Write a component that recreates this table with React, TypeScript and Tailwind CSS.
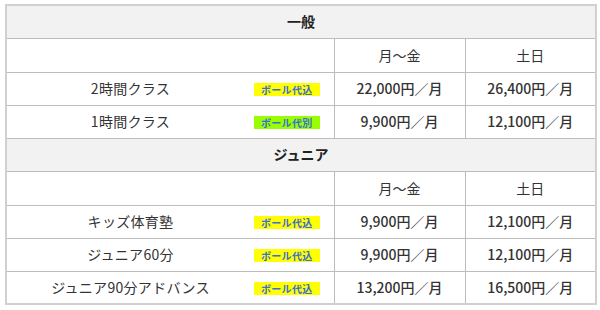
import React from 'react';

type Row = { name: string; badge: 'in' | 'out'; weekday: string; weekend: string };

const SECTIONS: { title: string; rows: Row[] }[] = [
  {
    title: '一般',
    rows: [
      { name: '2時間クラス', badge: 'in', weekday: '22,000円／月', weekend: '26,400円／月' },
      { name: '1時間クラス', badge: 'out', weekday: '9,900円／月', weekend: '12,100円／月' },
    ],
  },
  {
    title: 'ジュニア',
    rows: [
      { name: 'キッズ体育塾', badge: 'in', weekday: '9,900円／月', weekend: '12,100円／月' },
      { name: 'ジュニア60分', badge: 'in', weekday: '9,900円／月', weekend: '12,100円／月' },
      { name: 'ジュニア90分アドバンス', badge: 'in', weekday: '13,200円／月', weekend: '16,500円／月' },
    ],
  },
];

function Badge({ kind }: { kind: 'in' | 'out' }) {
  return (
    <span
      className={
        kind === 'in'
          ? 'inline-block bg-[#ffff00] text-[#3a6fd8] text-[10px] font-bold leading-[13px] px-[7px] tracking-[0.3px]'
          : 'inline-block bg-[#99ff00] text-[#3a6fd8] text-[10px] font-bold leading-[13px] px-[7px] tracking-[0.3px]'
      }
    >
      {kind === 'in' ? 'ボール代込' : 'ボール代別'}
    </span>
  );
}

export default function App() {
  const cell = 'border border-[#bcbcbc] text-center align-middle';
  return (
    <div
      className="bg-white w-[600px] h-[310px] pt-[4px] pl-[5px]"
      style={{ fontFamily: '"Noto Sans CJK JP", "Noto Sans", sans-serif' }}
    >
      <table className="w-[590px] border-collapse border-2 border-[#d0d0d0] text-[14px] text-[#333] table-fixed">
        <colgroup>
          <col className="w-[248px]" />
          <col className="w-[80px]" />
          <col className="w-[131px]" />
          <col className="w-[131px]" />
        </colgroup>
        <tbody>
          {SECTIONS.map(sec => (
            <React.Fragment key={sec.title}>
              <tr className="h-[33px]">
                <td colSpan={4} className={`${cell} bg-[#f2f2f2] font-bold text-[#222]`}>
                  {sec.title}
                </td>
              </tr>
              <tr className="h-[34px]">
                <td colSpan={2} className={cell}></td>
                <td className={cell}>月～金</td>
                <td className={cell}>土日</td>
              </tr>
              {sec.rows.map(r => (
                <tr key={r.name} className="h-[33px]">
                  <td className="border-y border-l border-[#bcbcbc] text-center align-middle tracking-[0.3px]">{r.name}</td>
                  <td className="border-y border-r border-[#bcbcbc] text-left align-middle">
                    <Badge kind={r.badge} />
                  </td>
                  <td className={`${cell} font-medium`}>{r.weekday}</td>
                  <td className={`${cell} font-medium`}>{r.weekend}</td>
                </tr>
              ))}
            </React.Fragment>
          ))}
        </tbody>
      </table>
    </div>
  );
}
